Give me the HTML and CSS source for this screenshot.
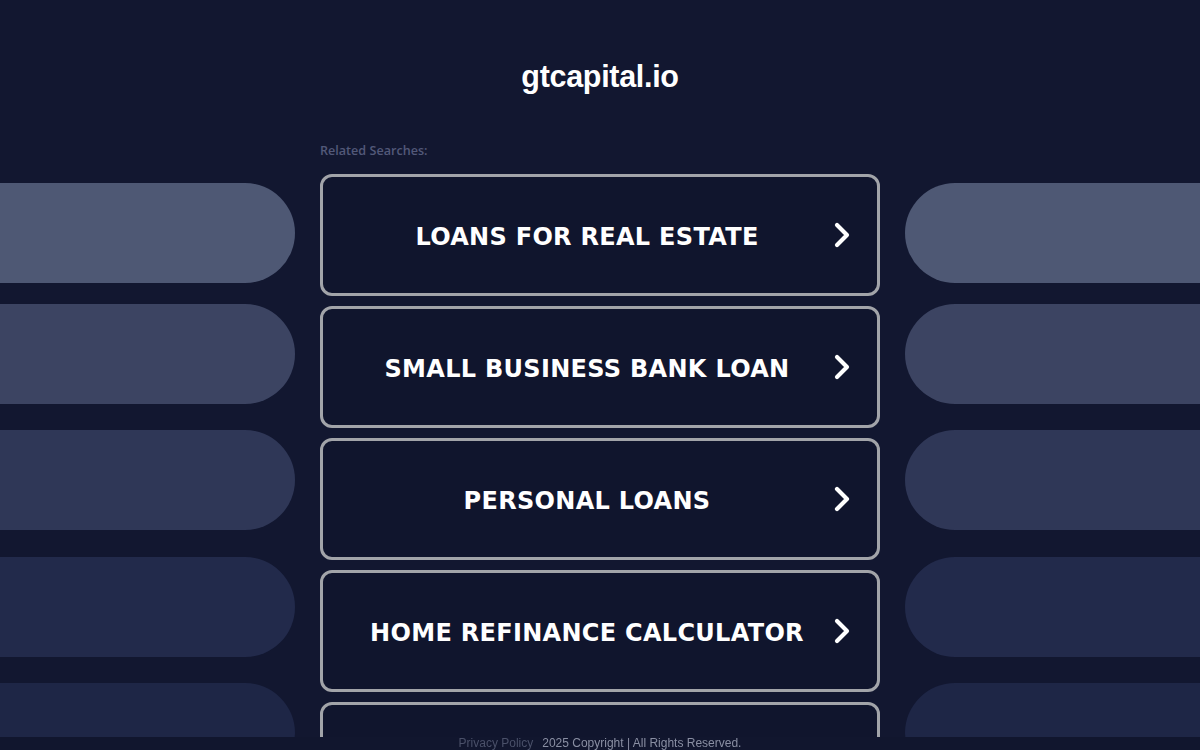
FILE: index.html
```html
<!DOCTYPE html>
<html>
<head>
<meta charset="utf-8">
<link rel="stylesheet" href="styles.css">
</head>
<body>
<header class="header">
  <h1 class="domain">gtcapital.io</h1>
</header>
<main class="layout">
  <div class="side side-left">
    <div class="pill p1"></div>
    <div class="pill p2"></div>
    <div class="pill p3"></div>
    <div class="pill p4"></div>
    <div class="pill p5"></div>
  </div>
  <div class="center">
    <div class="related">Related Searches:</div>
    <div class="links">
      <a class="link" href="#"><span class="link-text">LOANS FOR REAL ESTATE</span><svg class="chev" viewBox="0 0 16 26" width="16" height="26"><polyline points="3,3 13,13 3,23" /></svg></a>
      <a class="link" href="#"><span class="link-text">SMALL BUSINESS BANK LOAN</span><svg class="chev" viewBox="0 0 16 26" width="16" height="26"><polyline points="3,3 13,13 3,23" /></svg></a>
      <a class="link" href="#"><span class="link-text">PERSONAL LOANS</span><svg class="chev" viewBox="0 0 16 26" width="16" height="26"><polyline points="3,3 13,13 3,23" /></svg></a>
      <a class="link" href="#"><span class="link-text">HOME REFINANCE CALCULATOR</span><svg class="chev" viewBox="0 0 16 26" width="16" height="26"><polyline points="3,3 13,13 3,23" /></svg></a>
      <a class="link" href="#"><span class="link-text">MORTGAGE RATES</span><svg class="chev" viewBox="0 0 16 26" width="16" height="26"><polyline points="3,3 13,13 3,23" /></svg></a>
    </div>
  </div>
  <div class="side side-right">
    <div class="pill p1"></div>
    <div class="pill p2"></div>
    <div class="pill p3"></div>
    <div class="pill p4"></div>
    <div class="pill p5"></div>
  </div>
</main>
<footer class="footer">
  <span class="privacy">Privacy Policy</span>
  <span class="copy">2025 Copyright | All Rights Reserved.</span>
</footer>
</body>
</html>
```
FILE: styles.css
```css
html, body {
  margin: 0;
  padding: 0;
  height: 100%;
  overflow: hidden;
}
body {
  background: #121730;
  font-family: "Liberation Sans", Arial, sans-serif;
  color: #fff;
}
.header {
  height: 138px;
  display: flex;
  justify-content: center;
  align-items: flex-start;
}
.domain {
  margin: 58px 0 0 0;
  font-size: 30.5px;
  line-height: 36px;
  font-weight: bold;
  color: #ffffff;
  letter-spacing: -0.3px;
}
.layout {
  display: grid;
  grid-template-columns: 1fr 560px 1fr;
  column-gap: 25px;
}
.side {
  display: flex;
  flex-direction: column;
  padding-top: 45px;
}
.pill {
  height: 100px;
  flex: none;
}
.side-left .pill { border-radius: 0 50px 50px 0; }
.side-right .pill { border-radius: 50px 0 0 50px; }
.p1 { background: #4e5874; }
.p2 { background: #3c4462; margin-top: 21px; }
.p3 { background: #2f3757; margin-top: 26px; }
.p4 { background: #222a4b; margin-top: 27px; }
.p5 { background: #1e2646; margin-top: 26px; }
.related {
  font-family: "Open Sans", "Liberation Sans", sans-serif;
  font-size: 12.6px;
  font-weight: 600;
  line-height: 16px;
  color: #525979;
  height: 16px;
  padding-top: 5px;
  margin-bottom: 15px;
}
.links {
  display: flex;
  flex-direction: column;
  gap: 10px;
}
.link {
  box-sizing: border-box;
  height: 122px;
  border: 3px solid #a2a4a9;
  border-radius: 12px;
  background: #10152d;
  display: flex;
  align-items: center;
  padding: 0 27px 0 30px;
  text-decoration: none;
  color: #fff;
}
.link-text {
  flex: 1;
  text-align: center;
  font-family: "DejaVu Sans", Verdana, sans-serif;
  font-weight: bold;
  font-size: 24px;
  letter-spacing: 0.3px;
  margin-right: 13px;
  padding-top: 3px;
}
.chev {
  flex: none;
  fill: none;
  stroke: #ffffff;
  stroke-width: 4.2;
  stroke-linecap: round;
  stroke-linejoin: round;
}
.footer {
  position: fixed;
  left: 0;
  right: 0;
  bottom: 0;
  height: 13px;
  background: #11162e;
  display: flex;
  justify-content: center;
  align-items: center;
  gap: 9px;
  font-size: 12px;
  line-height: 13px;
}
.privacy { color: #4a5069; }
.copy { color: #8a8fa3; }
```
